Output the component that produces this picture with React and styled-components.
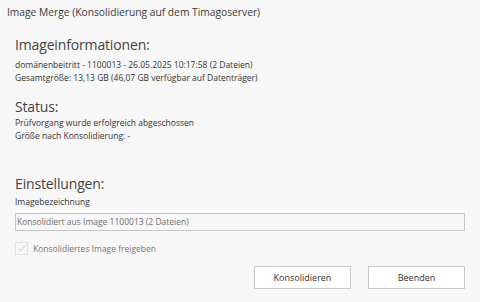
import React from "react";
import styled, { createGlobalStyle } from "styled-components";

const Global = createGlobalStyle`
  html, body { margin: 0; padding: 0; background: #f7f7f7; }
  body { font-family: "Open Sans", "Noto Sans", sans-serif; color: #333; }
`;

const Window = styled.div`
  width: 480px;
  height: 302px;
  box-sizing: border-box;
  background: #f7f7f7;
  display: flex;
  flex-direction: column;
  overflow: hidden;
`;

const TitleBar = styled.div`
  height: 24px;
  padding: 4px 0 0 7px;
  box-sizing: border-box;
  font-size: 10.25px;
  color: #3a3a3a;
  line-height: 16px;
  white-space: nowrap;
`;

const Content = styled.div`
  padding: 12px 15px 0 15px;
  display: flex;
  flex-direction: column;
`;

const Section = styled.div`
  display: flex;
  flex-direction: column;
  margin-bottom: ${(p) => p.$gap || 0}px;
`;

const Heading = styled.div`
  font-size: 14px;
  letter-spacing: -0.15px;
  line-height: 18px;
  color: #444;
  margin-bottom: ${(p) => p.$after || 0}px;
`;

const Line = styled.div`
  font-size: 8.5px;
  line-height: 13px;
  color: #333;
  white-space: nowrap;
`;

const Field = styled.div`
  margin-top: 5px;
  height: 18px;
  box-sizing: border-box;
  border: 1px solid #c6c6c6;
  background: #f7f7f7;
  padding: 0 1px;
  font-size: 8.5px;
  line-height: 16px;
  color: #6f6f6f;
`;

const CheckRow = styled.label`
  margin-top: 11px;
  display: flex;
  align-items: center;
  gap: 5px;
  font-size: 8.5px;
  color: #777;
  height: 13px;
`;

const Box = styled.span`
  width: 13px;
  height: 13px;
  box-sizing: border-box;
  border: 1px solid #e2e2e2;
  display: flex;
  align-items: center;
  justify-content: center;
`;

const Buttons = styled.div`
  margin-top: 11px;
  display: flex;
  justify-content: flex-end;
  gap: 17px;
`;

const Button = styled.button`
  width: 97px;
  height: 23px;
  box-sizing: border-box;
  border: 1px solid #c9c9c9;
  background: #fff;
  font-family: inherit;
  font-size: 9px;
  color: #333;
  padding: 0;
`;

export default function App() {
  return (
    <Window>
      <Global />
      <TitleBar>Image Merge (Konsolidierung auf dem Timagoserver)</TitleBar>
      <Content>
        <Section $gap={14}>
          <Heading $after={3.5}>Imageinformationen:</Heading>
          <Line>domänenbeitritt - 1100013 - 26.05.2025 10:17:58 (2 Dateien)</Line>
          <Line>Gesamtgröße: 13,13 GB (46,07 GB verfügbar auf Datenträger)</Line>
        </Section>
        <Section $gap={33}>
          <Heading>Status:</Heading>
          <Line>Prüfvorgang wurde erfolgreich abgeschossen</Line>
          <Line>Größe nach Konsolidierung: -</Line>
        </Section>
        <Section>
          <Heading $after={2}>Einstellungen:</Heading>
          <Line>Imagebezeichnung</Line>
          <Field>Konsolidiert aus Image 1100013 (2 Dateien)</Field>
          <CheckRow>
            <Box>
              <svg width="10" height="10" viewBox="0 0 10 10">
                <path d="M1.5 5.2 L4 7.6 L8.8 2.2" fill="none" stroke="#c8c8c8" strokeWidth="1" />
              </svg>
            </Box>
            Konsolidiertes Image freigeben
          </CheckRow>
          <Buttons>
            <Button>Konsolidieren</Button>
            <Button>Beenden</Button>
          </Buttons>
        </Section>
      </Content>
    </Window>
  );
}
